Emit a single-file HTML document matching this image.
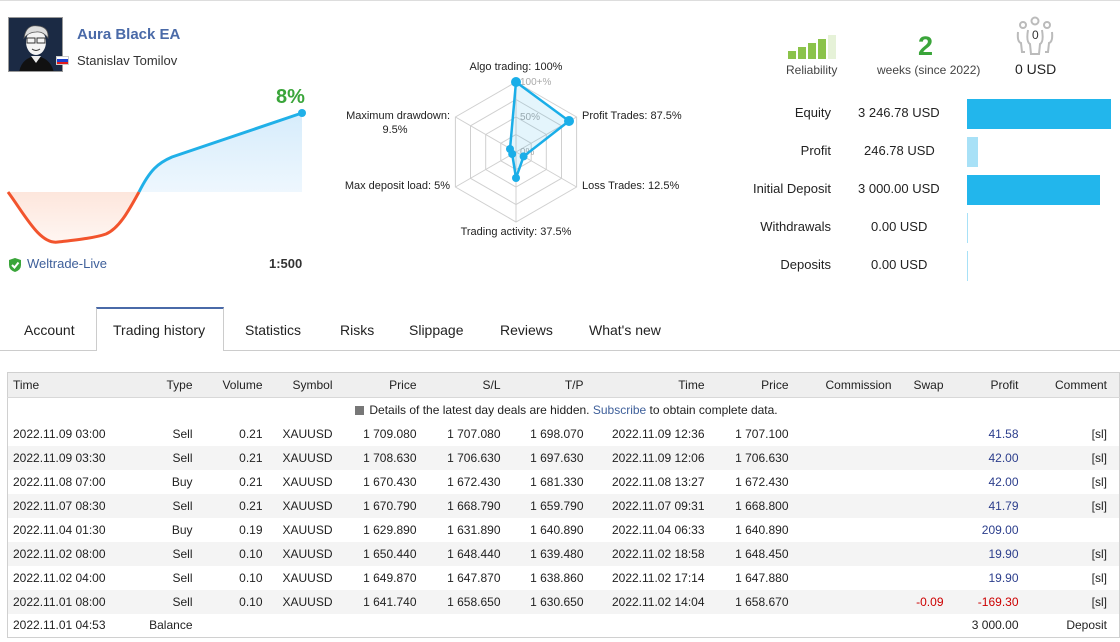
<!DOCTYPE html>
<html><head><meta charset="utf-8"><style>
*{margin:0;padding:0;box-sizing:border-box}
body{width:1120px;height:642px;overflow:hidden;background:#fff;font-family:"Liberation Sans","DejaVu Sans",sans-serif;color:#222;position:relative;font-size:13px}
.a{position:absolute;white-space:nowrap}
.r{text-align:right}
table{position:absolute;left:7px;top:372px;width:1112px;border-collapse:collapse;border:1px solid #d0d0d0;font-size:12px;table-layout:fixed}
td,th{height:24px;padding:0 4px;white-space:nowrap;text-align:right;font-weight:normal}
th{background:#efefef;border-bottom:1px solid #d8d8d8;height:25px;color:#222}
tr.g td{background:#f4f4f4}
td.l,th.l{text-align:left;padding-left:5px}
.b{color:#2c3e8c}
.n{color:#c00}
</style></head><body>
<div style="position:absolute;left:0;top:0;width:1120px;height:1px;background:#ddd"></div>
<!-- avatar -->
<div class="a" style="left:8px;top:17px;width:55px;height:55px;background:#1d2b46;border:1px solid #999;overflow:hidden">
<svg width="55" height="55"><rect width="55" height="55" fill="#1b2a44"/><path d="M10 55 Q12 40 27 38 Q42 40 45 55Z" fill="#111"/><path d="M22 38 L27 45 L32 38" fill="#eee"/><ellipse cx="27" cy="24" rx="10" ry="13" fill="#f4f4f4"/><path d="M15 20 Q17 6 29 8 Q40 9 39 20 Q34 13 27 14 Q20 14 15 20Z" fill="#ddd" stroke="#555" stroke-width=".8"/><rect x="18" y="20" width="8" height="5" fill="none" stroke="#333"/><rect x="28" y="20" width="8" height="5" fill="none" stroke="#333"/><path d="M23 31 Q27 34 31 31" stroke="#333" fill="none"/></svg></div>
<div class="a" style="left:56px;top:56px;width:13px;height:9px;border:1px solid #ccc"><div style="height:2px;background:#fff"></div><div style="height:3px;background:#1c3fd0"></div><div style="height:2px;background:#e01b1b"></div></div>
<div class="a" style="left:77px;top:26px;font-size:15px;font-weight:bold;color:#4a6aa8">Aura Black EA</div>
<div class="a" style="left:77px;top:53px;font-size:13px;color:#333">Stanislav Tomilov</div>
<div class="a" style="left:276px;top:86px;font-size:20px;font-weight:bold;color:#3aa53a">8%</div>
<svg class="a" style="left:0;top:100px" width="320" height="150">
<defs><linearGradient id="gb" x1="0" y1="0" x2="0" y2="1"><stop offset="0" stop-color="#d6ecfb"/><stop offset="1" stop-color="#eef7fe"/></linearGradient><linearGradient id="gr" x1="0" y1="0" x2="0" y2="1"><stop offset="0" stop-color="#fde6dc"/><stop offset="1" stop-color="#fff6f2"/></linearGradient></defs>
<path d="M139 92 C150 70 158 63 172 57 L302 13 L302 92Z" fill="url(#gb)"/>
<path d="M8 92 C25 115 40 145 58 142 C75 140 95 138 106 134 C120 128 130 108 139 92Z" fill="url(#gr)"/>
<path d="M8 92 C25 115 40 145 58 142 C75 140 95 138 106 134 C120 128 130 108 139 92" fill="none" stroke="#f2542d" stroke-width="3"/>
<path d="M139 92 C150 70 158 63 172 57 L302 13" fill="none" stroke="#20b0e8" stroke-width="3"/>
<circle cx="302" cy="13" r="4" fill="#20b0e8"/></svg>
<svg class="a" style="left:7px;top:257px" width="16" height="16"><path d="M8 1 L14 3 L14 8 Q14 13 8 15 Q2 13 2 8 L2 3Z" fill="#3aa53a"/><path d="M5 8 L7.5 10.5 L11.5 5.5" stroke="#fff" stroke-width="2" fill="none"/></svg>
<div class="a" style="left:27px;top:256px;font-size:13px;color:#3e5f9a">Weltrade-Live</div>
<div class="a" style="left:269px;top:256px;font-size:13px;font-weight:bold;color:#333">1:500</div>
<!-- radar -->
<svg class="a" style="left:330px;top:50px" width="380" height="200" font-size="11" font-family="Liberation Sans,sans-serif">
<g fill="none" stroke="#d0d0d0">
<polygon points="186,32 246.6,67 246.6,137 186,172 125.4,137 125.4,67"/>
<polygon points="186,49.5 231.5,75.8 231.5,128.3 186,154.5 140.5,128.3 140.5,75.8"/>
<polygon points="186,67 216.3,84.5 216.3,119.5 186,137 155.7,119.5 155.7,84.5"/>
<polygon points="186,84.5 201.2,93.3 201.2,110.8 186,119.5 170.8,110.8 170.8,93.3"/>
<path d="M186 102 L186 32 M186 102 L246.6 67 M186 102 L246.6 137 M186 102 L186 172 M186 102 L125.4 137 M186 102 L125.4 67"/>
</g>
<text x="190" y="35" fill="#aaa" font-size="10">100+%</text>
<text x="190" y="70" fill="#aaa" font-size="10">50%</text>
<text x="190" y="105" fill="#aaa" font-size="10">0%</text>
<polygon points="186,32 239,71 193.6,106.4 186,128 182.2,104 180,99" fill="rgba(32,176,232,0.12)" stroke="#1aaee8" stroke-width="2.5"/>
<g fill="#1aaee8"><circle cx="186" cy="32" r="5"/><circle cx="239" cy="71" r="5"/><circle cx="193.6" cy="106.4" r="4"/><circle cx="186" cy="128" r="4"/><circle cx="182.2" cy="104" r="4"/><circle cx="180" cy="99" r="4"/></g>
<g fill="#222"><text x="186" y="20" text-anchor="middle">Algo trading: 100%</text>
<text x="252" y="69">Profit Trades: 87.5%</text>
<text x="252" y="139">Loss Trades: 12.5%</text>
<text x="186" y="185" text-anchor="middle">Trading activity: 37.5%</text>
<text x="120" y="139" text-anchor="end">Max deposit load: 5%</text>
<text x="120" y="69" text-anchor="end">Maximum drawdown:</text>
<text x="65" y="83" text-anchor="middle">9.5%</text></g></svg>
<!-- right -->
<svg class="a" style="left:788px;top:35px" width="50" height="24"><rect x="0" y="16" width="8" height="8" fill="#8bc34a"/><rect x="10" y="12" width="8" height="12" fill="#8bc34a"/><rect x="20" y="8" width="8" height="16" fill="#8bc34a"/><rect x="30" y="4" width="8" height="20" fill="#8bc34a"/><rect x="40" y="0" width="8" height="24" fill="#e6f2d8"/></svg>
<div class="a" style="left:786px;top:63px;font-size:12px;color:#444">Reliability</div>
<div class="a" style="left:918px;top:31px;font-size:27px;font-weight:bold;color:#3aa53a">2</div>
<div class="a" style="left:877px;top:63px;font-size:12px;color:#444">weeks (since 2022)</div>
<svg class="a" style="left:1015px;top:16px" width="42" height="40" fill="none" stroke="#bbb" stroke-width="2"><circle cx="8" cy="9" r="3"/><circle cx="20" cy="5" r="3.5"/><circle cx="32" cy="9" r="3"/><path d="M3 16 Q2 26 6 27 L7 36 L10 36 M37 16 Q38 26 34 27 L33 36 L30 36 M13 14 Q11 26 15 28 L16 38 L24 38 L25 28 Q29 26 27 14"/></svg>
<div class="a" style="left:1032px;top:28px;font-size:12px;color:#333">0</div>
<div class="a" style="left:1015px;top:61px;font-size:14px;color:#222">0 USD</div>
<div class="a r" style="left:700px;width:131px;top:105px;font-size:13px">Equity</div>
<div class="a r" style="left:700px;width:131px;top:143px;font-size:13px">Profit</div>
<div class="a r" style="left:700px;width:131px;top:181px;font-size:13px">Initial Deposit</div>
<div class="a r" style="left:700px;width:131px;top:219px;font-size:13px">Withdrawals</div>
<div class="a r" style="left:700px;width:131px;top:257px;font-size:13px">Deposits</div>
<div class="a" style="left:858px;top:105px;font-size:13px">3 246.78 USD</div>
<div class="a" style="left:864px;top:143px;font-size:13px">246.78 USD</div>
<div class="a" style="left:858px;top:181px;font-size:13px">3 000.00 USD</div>
<div class="a" style="left:871px;top:219px;font-size:13px">0.00 USD</div>
<div class="a" style="left:871px;top:257px;font-size:13px">0.00 USD</div>
<div class="a" style="left:967px;top:99px;width:144px;height:30px;background:#22b6ec"></div>
<div class="a" style="left:967px;top:137px;width:11px;height:30px;background:#a8e1f7"></div>
<div class="a" style="left:967px;top:175px;width:133px;height:30px;background:#22b6ec"></div>
<div class="a" style="left:967px;top:213px;width:1px;height:30px;background:#a8e1f7"></div>
<div class="a" style="left:967px;top:251px;width:1px;height:30px;background:#a8e1f7"></div>
<!-- tabs -->
<div class="a" style="left:0;top:350px;width:1120px;height:1px;background:#ccc"></div>
<div class="a" style="left:96px;top:307px;width:128px;height:44px;background:#fff;border:1px solid #ccc;border-top:2px solid #4a6aa8;border-bottom:none"></div>
<div class="a" style="left:24px;top:322px;font-size:14px">Account</div>
<div class="a" style="left:113px;top:322px;font-size:14px">Trading history</div>
<div class="a" style="left:245px;top:322px;font-size:14px">Statistics</div>
<div class="a" style="left:340px;top:322px;font-size:14px">Risks</div>
<div class="a" style="left:409px;top:322px;font-size:14px">Slippage</div>
<div class="a" style="left:500px;top:322px;font-size:14px">Reviews</div>
<div class="a" style="left:589px;top:322px;font-size:14px">What's new</div>
<table>
<colgroup><col style="width:133px"><col style="width:56px"><col style="width:70px"><col style="width:70px"><col style="width:84px"><col style="width:84px"><col style="width:83px"><col style="width:121px"><col style="width:84px"><col style="width:103px"><col style="width:52px"><col style="width:75px"><col style="width:97px"></colgroup>
<tr><th class="l">Time</th><th>Type</th><th>Volume</th><th>Symbol</th><th>Price</th><th>S/L</th><th>T/P</th><th>Time</th><th>Price</th><th>Commission</th><th>Swap</th><th>Profit</th><th style="padding-right:12px">Comment</th></tr>
<tr><td colspan="13" style="text-align:center;padding-left:10px"><span style="display:inline-block;width:9px;height:9px;background:#777;vertical-align:-1px;margin-right:5px"></span>Details of the latest day deals are hidden. <span style="color:#3e5f9a">Subscribe</span> to obtain complete data.</td></tr>
<tr><td class="l">2022.11.09 03:00</td><td>Sell</td><td>0.21</td><td>XAUUSD</td><td>1 709.080</td><td>1 707.080</td><td>1 698.070</td><td>2022.11.09 12:36</td><td>1 707.100</td><td></td><td></td><td class="b">41.58</td><td style="padding-right:12px">[sl]</td></tr>
<tr class="g"><td class="l">2022.11.09 03:30</td><td>Sell</td><td>0.21</td><td>XAUUSD</td><td>1 708.630</td><td>1 706.630</td><td>1 697.630</td><td>2022.11.09 12:06</td><td>1 706.630</td><td></td><td></td><td class="b">42.00</td><td style="padding-right:12px">[sl]</td></tr>
<tr><td class="l">2022.11.08 07:00</td><td>Buy</td><td>0.21</td><td>XAUUSD</td><td>1 670.430</td><td>1 672.430</td><td>1 681.330</td><td>2022.11.08 13:27</td><td>1 672.430</td><td></td><td></td><td class="b">42.00</td><td style="padding-right:12px">[sl]</td></tr>
<tr class="g"><td class="l">2022.11.07 08:30</td><td>Sell</td><td>0.21</td><td>XAUUSD</td><td>1 670.790</td><td>1 668.790</td><td>1 659.790</td><td>2022.11.07 09:31</td><td>1 668.800</td><td></td><td></td><td class="b">41.79</td><td style="padding-right:12px">[sl]</td></tr>
<tr><td class="l">2022.11.04 01:30</td><td>Buy</td><td>0.19</td><td>XAUUSD</td><td>1 629.890</td><td>1 631.890</td><td>1 640.890</td><td>2022.11.04 06:33</td><td>1 640.890</td><td></td><td></td><td class="b">209.00</td><td style="padding-right:12px"></td></tr>
<tr class="g"><td class="l">2022.11.02 08:00</td><td>Sell</td><td>0.10</td><td>XAUUSD</td><td>1 650.440</td><td>1 648.440</td><td>1 639.480</td><td>2022.11.02 18:58</td><td>1 648.450</td><td></td><td></td><td class="b">19.90</td><td style="padding-right:12px">[sl]</td></tr>
<tr><td class="l">2022.11.02 04:00</td><td>Sell</td><td>0.10</td><td>XAUUSD</td><td>1 649.870</td><td>1 647.870</td><td>1 638.860</td><td>2022.11.02 17:14</td><td>1 647.880</td><td></td><td></td><td class="b">19.90</td><td style="padding-right:12px">[sl]</td></tr>
<tr class="g"><td class="l">2022.11.01 08:00</td><td>Sell</td><td>0.10</td><td>XAUUSD</td><td>1 641.740</td><td>1 658.650</td><td>1 630.650</td><td>2022.11.02 14:04</td><td>1 658.670</td><td></td><td class="n">-0.09</td><td class="n">-169.30</td><td style="padding-right:12px">[sl]</td></tr>
<tr><td class="l">2022.11.01 04:53</td><td>Balance</td><td></td><td></td><td></td><td></td><td></td><td></td><td></td><td></td><td></td><td>3 000.00</td><td style="padding-right:12px">Deposit</td></tr>
</table>
</body></html>
